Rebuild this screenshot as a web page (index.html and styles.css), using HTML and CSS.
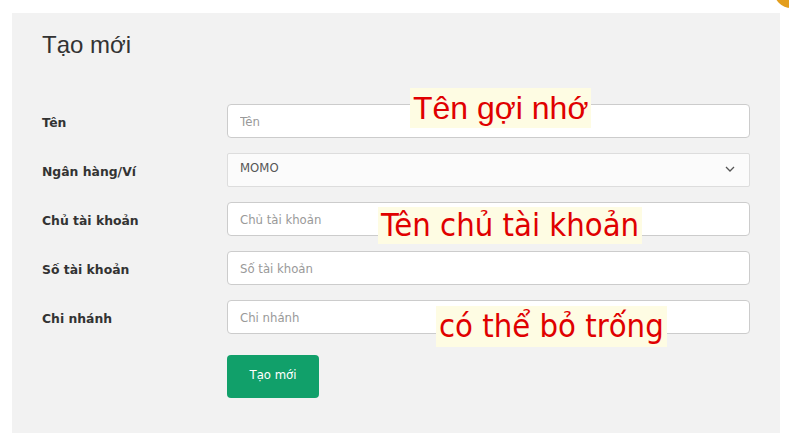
FILE: index.html
```html
<!DOCTYPE html>
<html>
<head>
    <title>Tạo mới</title>
    <link rel="stylesheet" href="styles.css">
</head>
<body>
    <div class="dot"></div>

    <div class="panel">
        <h2 class="title">Tạo mới</h2>

        <form class="form-grid">
            <label class="label" for="ten">Tên</label>
            <input class="field" id="ten" type="text" placeholder="Tên" />

            <label class="label" for="bank">Ngân hàng/Ví</label>
            <div class="select">
                <span>MOMO</span>
                <svg width="10" height="6" viewBox="0 0 10 6"><path d="M1 1l4 4 4-4" fill="none" stroke="#555" stroke-width="1.3"/></svg>
            </div>

            <label class="label" for="owner">Chủ tài khoản</label>
            <input class="field" id="owner" type="text" placeholder="Chủ tài khoản" />

            <label class="label" for="number">Số tài khoản</label>
            <input class="field" id="number" type="text" placeholder="Số tài khoản" />

            <label class="label" for="branch">Chi nhánh</label>
            <input class="field" id="branch" type="text" placeholder="Chi nhánh" />

            <span></span>
            <div><button class="button" type="button">Tạo mới</button></div>
        </form>

        <!-- ghi chú đè lên ảnh chụp -->
        <span class="note note-1">Tên gợi nhớ</span>
        <span class="note note-2">Tên chủ tài khoản</span>
        <span class="note note-3">có thể bỏ trống</span>
    </div>
</body>
</html>
```

FILE: styles.css
```css
body {
    margin: 0;
    background: #fff;
    font-family: "DejaVu Sans", sans-serif;
    color: #333;
    overflow: hidden;
}
.dot {
    position: absolute;
    top: -26px;
    left: 774px;
    width: 34px;
    height: 34px;
    border-radius: 50%;
    background: #e39e1d;
}
.panel {
    position: relative;
    width: 708px;
    height: 403px;
    margin: 13px 0 0 12px;
    padding: 17px 30px 0 30px;
    background: #f2f2f2;
}
.title {
    margin: 0;
    font-family: "Liberation Sans", Arial, sans-serif;
    font-weight: normal;
    font-size: 24px;
    line-height: 30px;
    color: #333;
}
.form-grid {
    display: grid;
    grid-template-columns: 185px 523px;
    grid-auto-rows: 34px;
    row-gap: 15px;
    margin-top: 44px;
    align-items: center;
}
.label {
    padding-top: 3px;
    font-size: 12.4px;
    font-weight: bold;
    color: #333;
}
.field {
    box-sizing: border-box;
    width: 100%;
    height: 34px;
    padding: 0 12px;
    border: 1px solid #ccc;
    border-radius: 4px;
    background: #fff;
    font-family: "DejaVu Sans Condensed", "DejaVu Sans", sans-serif;
    font-size: 13px;
    color: #555;
}
.field::placeholder {
    color: #999;
}
.select {
    box-sizing: border-box;
    height: 34px;
    display: flex;
    align-items: center;
    justify-content: space-between;
    padding: 0 14px 2px 12px;
    border: 1px solid #ddd;
    border-radius: 2px;
    background: #fbfbfb;
    font-family: "DejaVu Sans Condensed", "DejaVu Sans", sans-serif;
    font-size: 13px;
    color: #555;
}
.select span {
    margin-top: -4px;
}
.button {
    height: 43px;
    width: 92px;
    margin-top: 21px;
    border: none;
    border-radius: 4px;
    background: #11a06a;
    color: #fff;
    font-family: "DejaVu Sans Condensed", "DejaVu Sans", sans-serif;
    font-size: 13px;
    padding: 0 0 4px;
    cursor: pointer;
}
.note {
    position: absolute;
    background: #fefce3;
    color: #e00000;
    padding: 0 3px;
    white-space: nowrap;
}
.note-1 {
    left: 398px;
    top: 75px;
    font-family: "Liberation Sans", Arial, sans-serif;
    font-size: 32px;
    line-height: 40px;
}
.note-2 {
    left: 366px;
    top: 194px;
    font-family: "DejaVu Sans Condensed", "DejaVu Sans", sans-serif;
    font-size: 32.5px;
    line-height: 37px;
}
.note-3 {
    left: 424px;
    top: 293px;
    font-family: "DejaVu Sans Condensed", "DejaVu Sans", sans-serif;
    font-size: 32.5px;
    line-height: 41px;
}
```
